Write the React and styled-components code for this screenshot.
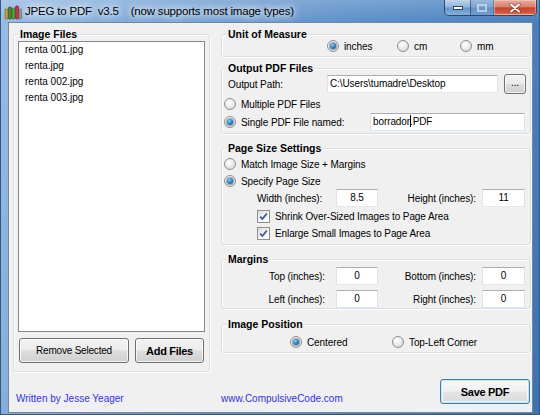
import React from 'react'
import styled, { createGlobalStyle } from 'styled-components'

const GlobalStyle = createGlobalStyle`
  html, body { margin: 0; padding: 0; background: #5b8fc8; }
  body {
    width: 540px;
    height: 415px;
    overflow: hidden;
    font-family: "Liberation Sans", Arial, sans-serif;
    font-size: 10px;
    letter-spacing: -0.1px;
    color: #000;
  }
`

export default function App() {
    return (
        <>
            <GlobalStyle />
            <Window>
                <TitleBar>
                    <AppIcon />
                    <Title>JPEG to PDF  v3.5    (now supports most image types)</Title>
                    <Caption>
                        <CapButton $w={25}>
                            <svg width="10" height="5"><rect x="0.5" y="0.5" width="9" height="3" fill="#fff" stroke="#2d4463" /></svg>
                        </CapButton>
                        <CapButton $w={22} $faded>
                            <svg width="10" height="8"><rect x="1" y="1" width="8" height="6" fill="none" stroke="#fff" strokeWidth="2" /></svg>
                        </CapButton>
                        <CloseButton>
                            <svg width="12" height="10">
                                <path d="M2 1.5 L10 8.5 M10 1.5 L2 8.5" stroke="#6a1e12" strokeWidth="3.6" strokeLinecap="round" opacity="0.55" />
                                <path d="M2 1.5 L10 8.5 M10 1.5 L2 8.5" stroke="#fff" strokeWidth="2" strokeLinecap="round" />
                            </svg>
                        </CloseButton>
                    </Caption>
                </TitleBar>
                <Frame>
                    <Client>
                        <Group>
                            <Legend>Image Files</Legend>
                            <Body $pad="1px 4px 8px 4px">
                                <ListBox>
                                    {['renta 001.jpg', 'renta.jpg', 'renta 002.jpg', 'renta 003.jpg'].map(f => (
                                        <ListItem key={f}>{f}</ListItem>
                                    ))}
                                </ListBox>
                                <ButtonRow>
                                    <Button $w={110}>Remove Selected</Button>
                                    <Button $w={69} $bold>Add Files</Button>
                                </ButtonRow>
                            </Body>
                        </Group>

                        <RightColumn>
                            <Group>
                                <Legend>Unit of Measure</Legend>
                                <Body $pad="0 0 4px 0">
                                    <Row $h={12} $pl={105}>
                                        <Option $w={70}><Radio $checked />inches</Option>
                                        <Option $w={63}><Radio />cm</Option>
                                        <Option><Radio />mm</Option>
                                    </Row>
                                </Body>
                            </Group>

                            <Group $mt={5}>
                                <Legend>Output PDF Files</Legend>
                                <Body $pad="0 0 2px 0">
                                    <Row $h={20}>
                                        <FieldLabel $left $w={105} $pl={6}>Output Path:</FieldLabel>
                                        <TextBox $w={171}>C:\Users\tumadre\Desktop</TextBox>
                                        <BrowseButton>...</BrowseButton>
                                    </Row>
                                    <Row $h={18} $mt={1} $pl={2}>
                                        <Option><Radio />Multiple PDF Files</Option>
                                    </Row>
                                    <Row $h={18} $pl={2}>
                                        <Option $w={146}><Radio $checked />Single PDF File named:</Option>
                                        <TextBox $w={155}>borrador<Caret />.PDF</TextBox>
                                    </Row>
                                </Body>
                            </Group>

                            <Group $mt={8}>
                                <Legend>Page Size Settings</Legend>
                                <Body $pad="0 0 3px 0">
                                    <Row $h={18} $mt={1} $pl={2}>
                                        <Option><Radio />Match Image Size + Margins</Option>
                                    </Row>
                                    <Row $h={16} $pl={2}>
                                        <Option><Radio $checked />Specify Page Size</Option>
                                    </Row>
                                    <FieldGrid>
                                        <FieldLabel $left $pl={35}>Width (inches):</FieldLabel>
                                        <TextBox $center>8.5</TextBox>
                                        <FieldLabel $pr={6}>Height (inches):</FieldLabel>
                                        <TextBox $center>11</TextBox>
                                    </FieldGrid>
                                    <Row $h={16} $mt={1} $pl={35}>
                                        <Option><CheckBox />Shrink Over-Sized Images to Page Area</Option>
                                    </Row>
                                    <Row $h={16} $mt={1} $pl={35}>
                                        <Option><CheckBox />Enlarge Small Images to Page Area</Option>
                                    </Row>
                                </Body>
                            </Group>

                            <Group $mt={8}>
                                <Legend>Margins</Legend>
                                <Body $pad="2px 0 0 0">
                                    <FieldGrid>
                                        <FieldLabel $pr={11}>Top (inches):</FieldLabel>
                                        <TextBox $center>0</TextBox>
                                        <FieldLabel $pr={6}>Bottom (inches):</FieldLabel>
                                        <TextBox $center>0</TextBox>
                                        <FieldLabel $pr={11}>Left (inches):</FieldLabel>
                                        <TextBox $center>0</TextBox>
                                        <FieldLabel $pr={6}>Right (inches):</FieldLabel>
                                        <TextBox $center>0</TextBox>
                                    </FieldGrid>
                                </Body>
                            </Group>

                            <Group $mt={9}>
                                <Legend>Image Position</Legend>
                                <Body $pad="4px 0 2px 0">
                                    <Row $h={16} $pl={68}>
                                        <Option $w={102}><Radio $checked />Centered</Option>
                                        <Option><Radio />Top-Left Corner</Option>
                                    </Row>
                                </Body>
                            </Group>
                        </RightColumn>

                        <FooterCell>
                            <Link>Written by Jesse Yeager</Link>
                        </FooterCell>
                        <FooterCell $split>
                            <Link>www.CompulsiveCode.com</Link>
                            <SaveButton>Save PDF</SaveButton>
                        </FooterCell>
                    </Client>
                </Frame>
            </Window>
        </>
    )
}

function AppIcon() {
    return (
        <IconBox>
            <svg width="18" height="16" viewBox="0 0 18 16">
                <rect x="1" y="5" width="3" height="10" rx="1" fill="#c4a43a" stroke="#6b5a1c" strokeWidth="0.6" />
                <rect x="4.5" y="3" width="3" height="12" rx="1" fill="#5e7e2a" stroke="#33461a" strokeWidth="0.6" />
                <rect x="8" y="4" width="3" height="11" rx="1" fill="#3fae3f" stroke="#1f6a1f" strokeWidth="0.6" />
                <rect x="11.5" y="2" width="3" height="13" rx="1" fill="#d22b4b" stroke="#7a1226" strokeWidth="0.6" />
                <rect x="15" y="5" width="2.5" height="10" rx="1" fill="#9a9a9a" stroke="#505050" strokeWidth="0.6" />
            </svg>
        </IconBox>
    )
}

function CheckBox() {
    return (
        <CheckFrame>
            <svg width="9" height="9" viewBox="0 0 9 9">
                <path d="M1.2 4.6 L3.4 7 L7.8 1.6" fill="none" stroke="#3b5998" strokeWidth="1.7" />
            </svg>
        </CheckFrame>
    )
}

const Window = styled.div`
    width: 540px;
    height: 415px;
    box-sizing: border-box;
    display: flex;
    flex-direction: column;
    border: 1px solid #34577f;
    border-top: none;
    background:
        linear-gradient(180deg, rgba(255,255,255,0.22) 0, rgba(255,255,255,0.04) 22px, rgba(255,255,255,0) 100%),
        linear-gradient(100deg, #94b9e2 0%, #6f9fd3 30%, #5389c4 62%, #3a73b5 100%);
`

const TitleBar = styled.div`
    height: 22px;
    flex: none;
    display: flex;
    align-items: center;
    padding-left: 3px;
`

const IconBox = styled.div`
    width: 18px;
    height: 16px;
    margin-top: 2px;
    display: flex;
`

const Title = styled.div`
    margin-left: 3px;
    font-size: 11.5px;
    letter-spacing: -0.2px;
    white-space: pre;
    color: #000;
    text-shadow: 0 0 6px #fff, 0 0 10px rgba(255,255,255,0.9), 0 0 14px rgba(255,255,255,0.7);
`

const Caption = styled.div`
    margin-left: auto;
    margin-right: 2px;
    align-self: flex-start;
    display: flex;
    height: 15px;
    border: 1px solid rgba(28,48,78,0.75);
    border-top: none;
    border-radius: 0 0 5px 5px;
    overflow: hidden;
`

const CapButton = styled.div`
    width: ${p => p.$w}px;
    display: flex;
    align-items: center;
    justify-content: center;
    padding-top: 1px;
    border-right: 1px solid rgba(28,48,78,0.6);
    opacity: ${p => p.$faded ? 0.55 : 1};
    background: linear-gradient(180deg, rgba(255,255,255,0.55) 0%, rgba(255,255,255,0.28) 48%, rgba(110,150,200,0.25) 52%, rgba(170,205,240,0.55) 100%);
    svg { display: block; }
`

const CloseButton = styled.div`
    width: 42px;
    display: flex;
    align-items: center;
    justify-content: center;
    background: linear-gradient(180deg, #e8aa9c 0%, #d9806f 46%, #c5432c 52%, #d3583c 85%, #e48a64 100%);
    box-shadow: inset 0 0 0 1px rgba(255,220,210,0.45);
`

const Frame = styled.div`
    flex: 1;
    display: flex;
    padding: 0 6px 1px 7px;
`

const Client = styled.div`
    flex: 1;
    box-sizing: border-box;
    background: #f0f0f0;
    border: 1px solid rgba(36,64,102,0.6);
    padding: 5px 1px 0 4px;
    display: grid;
    grid-template-columns: 197px 310px;
    grid-template-rows: 344px 40px;
    column-gap: 11px;
`

const Group = styled.fieldset`
    margin: ${p => p.$mt || 0}px 0 0 0;
    padding: 0;
    min-width: 0;
    border: 1px solid #d5dfe5;
    border-radius: 3px;
    box-shadow: inset 1px 1px 0 #fff, 1px 1px 0 #fff;
`

const Legend = styled.legend`
    margin-left: 4px;
    padding: 0 2px;
    height: 12px;
    line-height: 12px;
    font-size: 10.5px;
    font-weight: bold;
    letter-spacing: 0;
    background: #f0f0f0;
`

const Body = styled.div`
    padding: ${p => p.$pad};
`

const RightColumn = styled.div`
    display: flex;
    flex-direction: column;
    align-self: start;
`

const Row = styled.div`
    display: flex;
    align-items: center;
    height: ${p => p.$h}px;
    margin-top: ${p => p.$mt || 0}px;
    padding-left: ${p => p.$pl || 0}px;
    white-space: nowrap;
`

const Option = styled.label`
    display: flex;
    align-items: center;
    gap: 5px;
    flex: none;
    width: ${p => p.$w ? `${p.$w}px` : 'auto'};
`

const Radio = styled.span`
    width: 12px;
    height: 12px;
    box-sizing: border-box;
    flex: none;
    border-radius: 50%;
    border: 1px solid #8e8f8f;
    background: radial-gradient(circle at 40% 35%, #ffffff 0%, #ececec 45%, #cfcfcf 100%);
    display: flex;
    align-items: center;
    justify-content: center;

    &::after {
        content: '';
        display: ${p => p.$checked ? 'block' : 'none'};
        width: 6px;
        height: 6px;
        border-radius: 50%;
        background: radial-gradient(circle at 40% 35%, #8fd0f2 0%, #2680c2 50%, #0d4477 100%);
        box-shadow: 0 0 0 1px rgba(20,60,100,0.4);
    }
`

const CheckFrame = styled.span`
    width: 13px;
    height: 13px;
    box-sizing: border-box;
    flex: none;
    border: 1px solid #8e8f8f;
    background: linear-gradient(135deg, #dcdcdc 0%, #f6f6f6 60%, #ffffff 100%);
    display: flex;
    align-items: center;
    justify-content: center;
    svg { display: block; }
`

const FieldLabel = styled.span`
    flex: none;
    width: ${p => p.$w ? `${p.$w}px` : 'auto'};
    box-sizing: border-box;
    text-align: ${p => p.$left ? 'left' : 'right'};
    padding-left: ${p => p.$pl || 0}px;
    padding-right: ${p => p.$pr || 0}px;
    white-space: nowrap;
`

const FieldGrid = styled.div`
    display: grid;
    grid-template-columns: 114px 42px 104px 43px;
    grid-auto-rows: 18px;
    row-gap: 5px;
    align-items: center;
`

const TextBox = styled.div`
    width: ${p => p.$w ? `${p.$w}px` : 'auto'};
    height: 18px;
    box-sizing: border-box;
    flex: none;
    background: #fff;
    border: 1px solid #e2e3ea;
    border-top-color: #abadb3;
    border-bottom-color: #e3e9ef;
    padding: 0 2px;
    line-height: 16px;
    text-align: ${p => p.$center ? 'center' : 'left'};
    white-space: nowrap;
    overflow: hidden;
`

const Caret = styled.span`
    display: inline-block;
    width: 1px;
    height: 12px;
    margin-right: -1px;
    vertical-align: -2px;
    background: #000;
`

const buttonFace = `
    box-sizing: border-box;
    border: 1px solid #707070;
    border-radius: 3px;
    background: linear-gradient(180deg, #f2f2f2 0%, #ebebeb 48%, #dddddd 52%, #cfcfcf 100%);
    box-shadow: inset 0 0 0 1px rgba(255,255,255,0.75);
    display: flex;
    align-items: center;
    justify-content: center;
    color: #000;
    white-space: nowrap;
`

const BrowseButton = styled.div`
    ${buttonFace}
    width: 22px;
    height: 20px;
    margin-left: 6px;
    line-height: 1;
    padding-bottom: 2px;
`

const ListBox = styled.div`
    height: 291px;
    box-sizing: border-box;
    background: #fff;
    border: 1px solid #828790;
    padding: 0 0 0 6px;
`

const ListItem = styled.div`
    height: 16px;
    line-height: 16px;
    letter-spacing: 0;
`

const ButtonRow = styled.div`
    display: flex;
    gap: 6px;
    margin-top: 6px;
    padding-left: 1px;
`

const Button = styled.div`
    ${buttonFace}
    width: ${p => p.$w}px;
    height: 25px;
    font-weight: ${p => p.$bold ? 'bold' : 'normal'};
    font-size: ${p => p.$bold ? '11px' : '10px'};
    letter-spacing: ${p => p.$bold ? '-0.3px' : '-0.2px'};
`

const SaveButton = styled.div`
    ${buttonFace}
    width: 90px;
    height: 25px;
    margin: 7px 1px 0 0;
    font-weight: bold;
    font-size: 11px;
    letter-spacing: -0.3px;
    border-color: #3c7fb1;
    background: linear-gradient(180deg, #f7f7f7 0%, #f0f0f0 48%, #e5e5e5 52%, #dadada 100%);
    box-shadow: inset 0 0 0 1px #c4e5f6, inset 0 0 0 2px rgba(255,255,255,0.6);
`

const FooterCell = styled.div`
    display: flex;
    align-items: flex-start;
    justify-content: ${p => p.$split ? 'space-between' : 'flex-start'};
    padding-left: ${p => p.$split ? 0 : 3}px;
`

const Link = styled.span`
    margin-top: 20px;
    line-height: 13px;
    color: #3333e6;
    letter-spacing: 0;
`
